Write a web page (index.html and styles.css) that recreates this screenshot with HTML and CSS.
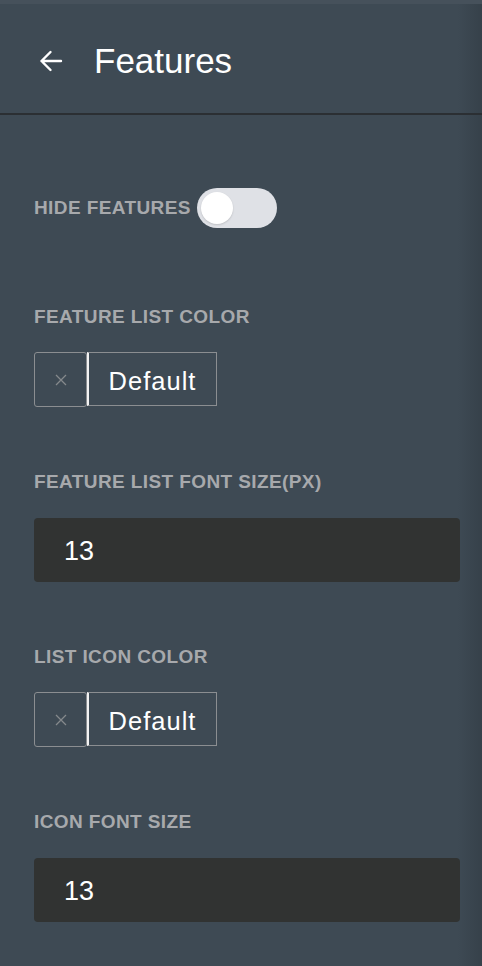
FILE: index.html
```html
<!DOCTYPE html>
<html lang="en">
<head>
<meta charset="utf-8">
<title>Features</title>
<link rel="stylesheet" href="styles.css">
</head>
<body>
<div class="panel">
  <header class="header">
    <svg class="back" width="24" height="24" viewBox="0 0 24 24" aria-hidden="true">
      <path d="M22 12H2.5M11.5 3L2.5 12l9 9" fill="none" stroke="#ffffff" stroke-width="2.4" stroke-linecap="round" stroke-linejoin="round"/>
    </svg>
    <h1 class="title">Features</h1>
  </header>

  <main class="content">
    <div class="toggle-row">
      <span class="label">HIDE FEATURES</span>
      <span class="switch"><span class="knob"></span></span>
    </div>

    <div class="field">
      <div class="label">FEATURE LIST COLOR</div>
      <div class="color-picker">
        <span class="clear">
          <svg width="12" height="12" viewBox="0 0 12 12" aria-hidden="true"><path d="M1 1L11 11M11 1L1 11" stroke="#85898c" stroke-width="1.3" fill="none"/></svg>
        </span>
        <span class="color-value">Default</span>
      </div>
    </div>

    <div class="field field-input">
      <div class="label">FEATURE LIST FONT SIZE(PX)</div>
      <div class="input">13</div>
    </div>

    <div class="field">
      <div class="label">LIST ICON COLOR</div>
      <div class="color-picker">
        <span class="clear">
          <svg width="12" height="12" viewBox="0 0 12 12" aria-hidden="true"><path d="M1 1L11 11M11 1L1 11" stroke="#85898c" stroke-width="1.3" fill="none"/></svg>
        </span>
        <span class="color-value">Default</span>
      </div>
    </div>

    <div class="field field-input">
      <div class="label">ICON FONT SIZE</div>
      <div class="input">13</div>
    </div>
  </main>
</div>
</body>
</html>
```

FILE: styles.css
```css
html, body {
  margin: 0;
  padding: 0;
}

body {
  width: 482px;
  height: 966px;
  overflow: hidden;
  font-family: "Liberation Sans", Arial, sans-serif;
  background: linear-gradient(to right, #3e4a54 0, #3e4a54 458px, #36414a 482px);
  color: #ffffff;
}

.panel {
  display: flex;
  flex-direction: column;
}

.header {
  border-top: 4px solid #46515b;
  border-bottom: 2px solid #2b2f33;
  display: flex;
  align-items: center;
  padding-left: 39px;
  padding-top: 4px;
  box-sizing: content-box;
  height: 105px;
}

.back {
  display: block;
  flex: none;
}

.title {
  margin: 0 0 0 31px;
  font-size: 35px;
  font-weight: normal;
  line-height: 40px;
  color: #ffffff;
}

.content {
  display: flex;
  flex-direction: column;
  padding: 73px 22px 0 34px;
}

.label {
  font-size: 19px;
  font-weight: bold;
  line-height: 20px;
  letter-spacing: 0.4px;
  color: #a7a9ac;
}

.toggle-row {
  display: flex;
  align-items: center;
  gap: 6px;
  height: 40px;
}

.switch {
  position: relative;
  width: 80px;
  height: 40px;
  border-radius: 20px;
  background: #dfe1e6;
  flex: none;
}

.knob {
  position: absolute;
  left: 4px;
  top: 4px;
  width: 32px;
  height: 32px;
  border-radius: 50%;
  background: #ffffff;
  box-shadow: 0 1px 2px rgba(0, 0, 0, 0.15);
}

.field {
  display: flex;
  flex-direction: column;
  gap: 25px;
  margin-top: 79px;
}

.field + .field {
  margin-top: 65px;
}

.field-input {
  gap: 26px;
}

.color-picker {
  display: flex;
  height: 55px;
}

.clear {
  width: 51px;
  box-sizing: content-box;
  border: 1.5px solid #8b8e91;
  border-radius: 3px;
  display: flex;
  align-items: center;
  justify-content: center;
}

.color-value {
  width: 127px;
  box-sizing: content-box;
  border: 1.5px solid #8b8e91;
  border-left: 2px solid #f2f2f2;
  display: flex;
  align-items: center;
  justify-content: center;
  font-size: 25.5px;
  letter-spacing: 1px;
  padding-top: 4px;
  height: 48px;
}

.input {
  height: 64px;
  box-sizing: border-box;
  background: #313332;
  border-radius: 4px;
  display: flex;
  align-items: center;
  padding-left: 30px;
  padding-top: 2px;
  font-size: 27px;
  color: #ffffff;
}
```
